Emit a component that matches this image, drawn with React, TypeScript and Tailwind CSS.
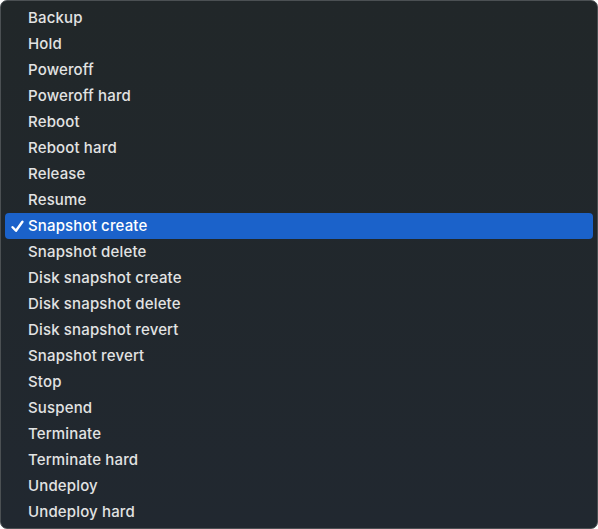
import React from "react";

const items = [
  "Backup",
  "Hold",
  "Poweroff",
  "Poweroff hard",
  "Reboot",
  "Reboot hard",
  "Release",
  "Resume",
  "Snapshot create",
  "Snapshot delete",
  "Disk snapshot create",
  "Disk snapshot delete",
  "Disk snapshot revert",
  "Snapshot revert",
  "Stop",
  "Suspend",
  "Terminate",
  "Terminate hard",
  "Undeploy",
  "Undeploy hard",
];

export default function App() {
  return (
    <div
      className="w-[598px] h-[529px] rounded-[7px] border border-[#4b5053] bg-gradient-to-b from-[#212729] to-[#212830] pt-[4px] px-[4px] overflow-hidden"
      style={{ fontFamily: "Inter, 'Liberation Sans', sans-serif" }}
    >
      <ul className="flex flex-col">
        {items.map((it) => {
          const sel = it === "Snapshot create";
          return (
            <li
              key={it}
              className={
                "relative h-[26px] flex items-center pl-[23px] rounded-[4px] text-[15px] tracking-[0.15px] font-[450] " +
                (sel ? "bg-[#1b62ca] text-white" : "text-[#e2e3e3]")
              }
            >
              {sel && (
                <span className="absolute left-[6px] top-0 h-full flex items-center">
                  <svg width="13" height="13" viewBox="0 0 13 13">
                    <path d="M1.6 7.2 L5 10.8 L11.4 1.8" fill="none" stroke="white" strokeWidth="2.4" strokeLinecap="round" strokeLinejoin="round" />
                  </svg>
                </span>
              )}
              {it}
            </li>
          );
        })}
      </ul>
    </div>
  );
}
